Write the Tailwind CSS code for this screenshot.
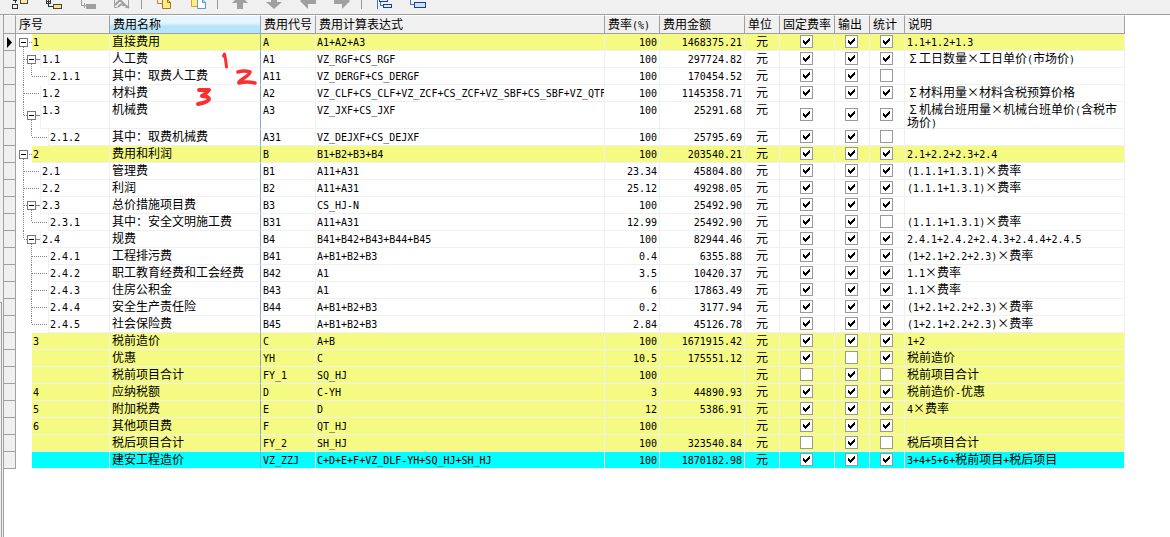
<!DOCTYPE html>
<html lang="zh-CN">
<head>
<meta charset="utf-8">
<title>费用汇总</title>
<script src="https://cdn.jsdelivr.net/npm/@tailwindcss/browser@4"></script>
</head>
<body class="min-h-screen flex flex-col bg-white text-black text-[12px] leading-[12px] font-['Noto_Sans_CJK_SC',sans-serif] overflow-hidden">
<header class="h-[15px] shrink-0 flex items-start pl-3 bg-[#f0f0f0] border-b border-[#a0a0a0]">
  <div class="flex gap-4">
    <button aria-label="插入费用"><svg class="block" width="18" height="10" fill="none" shape-rendering="crispEdges"><path d="M.5 4.500h5v4h-5zM1 .5h4M3.500 0v3" stroke="#333"/><path d="M8.500 -3v6h7v-6" fill="#fde9a0" stroke="#444"/></svg></button>
    <button aria-label="插入子费用"><svg class="block" width="18" height="10" fill="none" shape-rendering="crispEdges"><path d="M.5 -.5h4v4h-4zM0 1.500h5M2.500 0v6.500H7" stroke="#333"/><path d="M7.500 4.500h8v4h-8z" fill="#fde08a" stroke="#444"/></svg></button>
    <button aria-label="删除"><svg class="block" width="18" height="10" fill="none" shape-rendering="crispEdges"><path d="M1.500 0v5.500H6M4.500 3v5" stroke="#a0a0a0"/><path d="M6 4h10v5H6z" fill="#a0a0a0"/></svg></button>
    <button aria-label="编辑"><svg class="block" width="18" height="10" fill="none"><path d="M.5 0v7.500h3M14.500 0v7.500h-3" stroke="#a0a0a0"/><path d="M1 5L6 0l5 5 4 3M4 7q4-5 6-1" stroke="#a0a0a0" stroke-width="2"/></svg></button>
  </div>
  <span class="ml-[9px] mr-[14px] w-px h-[9px] bg-[#999]"></span>
  <div class="flex gap-4">
    <button aria-label="复制"><svg class="block" width="18" height="10" fill="none"><path d="M1.500 0v3.500H6" stroke="#c08a20"/><path d="M6.500 -2v10.500h8V2.500L11.500 0" fill="#fdec8a" stroke="#a8750e"/><path d="M11.500 0v2.500h3" stroke="#a8750e"/></svg></button>
    <button aria-label="粘贴"><svg class="block" width="18" height="10" fill="none"><path d="M1.500 -1v7.500h6V-1" fill="#fdf07c" stroke="#c8a63a"/><path d="M7.500 -2v10.500h8V2.500L12.500 0" fill="#fff" stroke="#5b9bd5"/><path d="M12.500 0v2.500h3" stroke="#5b9bd5"/></svg></button>
  </div>
  <span class="ml-[9px] mr-[14px] w-px h-[9px] bg-[#999]"></span>
  <div class="flex gap-4">
    <button aria-label="上移"><svg class="block" width="18" height="10" fill="#a0a0a0"><path d="M0 3L3 0h10l3 3h-5v6H5V3z"/></svg></button>
    <button aria-label="下移"><svg class="block" width="18" height="10" fill="#a0a0a0"><path d="M5 0h6v2h5L8 9 0 2h5z"/></svg></button>
    <button aria-label="左移"><svg class="block" width="18" height="10" fill="#a0a0a0"><path d="M0 1l1-1h15v4H8v5z"/></svg></button>
    <button aria-label="右移"><svg class="block" width="18" height="10" fill="#a0a0a0"><path d="M16 1l-1-1H0v4h8v5z"/></svg></button>
  </div>
  <span class="ml-[9px] mr-[14px] w-px h-[9px] bg-[#999]"></span>
  <div class="flex gap-4">
    <button aria-label="展开"><svg class="block" width="18" height="10" fill="none" shape-rendering="crispEdges"><path d="M1.500 0v9M4.500 0v5.500H8" stroke="#3a78c0"/><path d="M3.500 -2.500h8v4h-8zM7.500 4.500h8v3h-8z" fill="#dfe9fa" stroke="#1c3f94"/></svg></button>
    <button aria-label="折叠"><svg class="block" width="18" height="10" fill="none" shape-rendering="crispEdges"><path d="M.5 0v4.500H4" stroke="#3a78c0"/><path d="M4.500 2.500h11v5h-11z" fill="#cfdff8" stroke="#1c3f94"/></svg></button>
  </div>
</header>
<main class="relative flex-1 flex">
  <div class="w-1 shrink-0 flex flex-col bg-[#f0f0f0] border-r border-[#a0a0a0]">
    <div class="h-[287px]"></div>
    <div class="flex-1 w-[2px] border-t border-r border-[#a0a0a0]"></div>
  </div>
  <div class="flex-1 mr-[45px]">
    <table class="w-full table-fixed border-separate border-spacing-0">
      <colgroup>
        <col class="w-[12px]"><col class="w-[94px]"><col class="w-[151px]"><col class="w-[55px]"><col class="w-[289px]"><col class="w-[55px]"><col class="w-[85px]"><col class="w-[35px]"><col class="w-[55px]"><col class="w-[35px]"><col class="w-[35px]"><col>
      </colgroup>
      <thead><tr id="head"></tr></thead>
      <tbody id="rows"></tbody>
    </table>
  </div>
  <svg class="absolute left-[190px] top-[30px] pointer-events-none" width="72" height="65" fill="none" stroke="#fb2f2f" stroke-width="4" stroke-linecap="round" stroke-linejoin="round" aria-hidden="true">
    <path stroke-width="3" d="M33.500 11L34.500 9l1 5 1 8"/><path stroke-width="3.500" d="M48 27q6-2 12 0-1 3-6 6-6 4-5 5 8-2 16 0"/><path d="M9 45h10q-2 3-7 6 6 0 7 3 0 3-11 5"/>
  </svg>
</main>
<script>
const heads = ['', '序号', '费用名称', '费用代号', '费用计算表达式', '费率(%)', '费用金额', '单位', '固定费率', '输出', '统计', '说明'];
// level, number, name, code, expression, rate, amount, checks, note, tree flags (c: has children, l: last sibling, p: parent line continues), colour, height
const data = [
 [0,'1','直接费用','A','A1+A2+A3','100','1468375.21','111','1.1+1.2+1.3','c','y'],
 [1,'1.1','人工费','A1','VZ_RGF+CS_RGF','100','297724.82','111','Σ工日数量×工日单价(市场价)','c',''],
 [2,'2.1.1','其中：取费人工费','A11','VZ_DERGF+CS_DERGF','100','170454.52','110','','lp',''],
 [1,'1.2','材料费','A2','VZ_CLF+CS_CLF+VZ_ZCF+CS_ZCF+VZ_SBF+CS_SBF+VZ_QTF','100','1145358.71','111','Σ材料用量×材料含税预算价格','',''],
 [1,'1.3','机械费','A3','VZ_JXF+CS_JXF','100','25291.68','111','Σ机械台班用量×机械台班单价(含税市场价)','cl','',27],
 [2,'2.1.2','其中：取费机械费','A31','VZ_DEJXF+CS_DEJXF','100','25795.69','110','','l',''],
 [0,'2','费用和利润','B','B1+B2+B3+B4','100','203540.21','111','2.1+2.2+2.3+2.4','c','y'],
 [1,'2.1','管理费','B1','A11+A31','23.34','45804.80','111','(1.1.1+1.3.1)×费率','',''],
 [1,'2.2','利润','B2','A11+A31','25.12','49298.05','111','(1.1.1+1.3.1)×费率','',''],
 [1,'2.3','总价措施项目费','B3','CS_HJ-N','100','25492.90','111','','c',''],
 [2,'2.3.1','其中：安全文明施工费','B31','A11+A31','12.99','25492.90','110','(1.1.1+1.3.1)×费率','lp',''],
 [1,'2.4','规费','B4','B41+B42+B43+B44+B45','100','82944.46','111','2.4.1+2.4.2+2.4.3+2.4.4+2.4.5','cl',''],
 [2,'2.4.1','工程排污费','B41','A+B1+B2+B3','0.4','6355.88','111','(1+2.1+2.2+2.3)×费率','',''],
 [2,'2.4.2','职工教育经费和工会经费','B42','A1','3.5','10420.37','111','1.1×费率','',''],
 [2,'2.4.3','住房公积金','B43','A1','6','17863.49','111','1.1×费率','',''],
 [2,'2.4.4','安全生产责任险','B44','A+B1+B2+B3','0.2','3177.94','111','(1+2.1+2.2+2.3)×费率','',''],
 [2,'2.4.5','社会保险费','B45','A+B1+B2+B3','2.84','45126.78','111','(1+2.1+2.2+2.3)×费率','l',''],
 [0,'3','税前造价','C','A+B','100','1671915.42','111','1+2','','y'],
 [0,'','优惠','YH','C','10.5','175551.12','101','税前造价','','y'],
 [0,'','税前项目合计','FY_1','SQ_HJ','100','','010','税前项目合计','','y'],
 [0,'4','应纳税额','D','C-YH','3','44890.93','111','税前造价-优惠','','y'],
 [0,'5','附加税费','E','D','12','5386.91','111','4×费率','','y'],
 [0,'6','其他项目费','F','QT_HJ','100','','111','','','y'],
 [0,'','税后项目合计','FY_2','SH_HJ','100','323540.84','010','税后项目合计','','y'],
 [0,'','建安工程造价','VZ_ZZJ','C+D+E+F+VZ_DLF-YH+SQ_HJ+SH_HJ','100','1870182.98','111','3+4+5+6+税前项目+税后项目','','b'],
];
const fmt = s => s.replace(/[\x20-\x7e]+|[Σ×]/g, m => /[Σ×]/.test(m)
  ? `<span class="inline-block w-3 leading-[12px] text-center">${m}</span>`
  : `<span class="text-[10px] leading-[0] font-['DejaVu_Sans_Mono',monospace]">${m}</span>`);
const fills = { y: 'bg-[#f5fa82]', b: 'bg-[#00ffff]', '': 'bg-white' };

function tree(level, flags, h) {
  const w = 16 + level * 8, m = Math.floor(h / 2), x = level * 8 - .5;
  let d = '', box = '';
  if (level === 2 && flags.includes('p')) d += `M7.5 0V${h}`;
  if (level) d += `M${x} 0V${flags.includes('l') ? m : h}M${x} ${m + .5}H${w}`;
  if (flags.includes('c')) {
    d += `M${x + 8} ${m + 5}V${h}M${x + 13} ${m + .5}H${w}`;
    box = `<path d="M${x + 4} ${m - 3.5}h8v8h-8z" fill="#fff" stroke="#777"/><path d="M${x + 5.5} ${m + .5}h5" stroke="#000"/>`;
  }
  return `<svg class="shrink-0" width="${w}" height="${h}" fill="none" shape-rendering="crispEdges" aria-hidden="true"><path d="${d}" stroke="#808080" stroke-dasharray="1 1"/>${box}</svg>`;
}

document.getElementById('head').innerHTML = heads.map((t, i) => {
  const tone = i === 2 ? 'bg-linear-to-b from-[#e6f6fe] from-40% to-[#b8e4fb] to-60% border-r-[#8aa9c8]' : 'bg-[#f0f0f0] border-r-[#a0a0a0]';
  return `<th scope="col" aria-label="${t || '当前行'}" class="h-[19px] p-0 pl-[3px] pb-[2px] align-middle text-left font-normal whitespace-nowrap overflow-hidden border-r border-b border-t border-t-white border-b-[#a0a0a0] ${tone}">${fmt(t)}</th>`;
}).join('');

document.getElementById('rows').innerHTML = data.map((r, n) => {
  const [level, no, name, code, expr, rate, amount, checks, note, flags, color, h = 17] = r;
  const fill = fills[color];
  const edge = 'border-r border-b border-[#f0f0f0]';
  const cell = (t, extra) => `<td class="p-0 pt-px ${edge} ${extra} ${fill} align-top whitespace-nowrap overflow-hidden">${fmt(t)}</td>`;
  const check = i => `<td class="p-0 pr-px pb-px ${edge} ${fill} align-middle"><label class="grid w-[13px] mx-auto"><input type="checkbox" ${checks[i] === '1' ? 'checked' : ''} aria-label="${heads[8 + i]} ${name}" class="peer appearance-none col-start-1 row-start-1 block size-[13px] bg-white border border-[#999]"><svg class="invisible peer-checked:visible col-start-1 row-start-1 pointer-events-none" width="13" height="13" shape-rendering="crispEdges"><path d="M3 5h1v1h1v1h1v-1h1v-1h1v-1h1v-1h1v3h-1v1h-1v1h-1v1h-1v1h-1v-1h-1v-1h-1z"/></svg></label></td>`;
  return `<tr>
    <td class="p-0 bg-[#f0f0f0] border-r border-b border-[#a0a0a0]">${n ? '' : '<svg class="block ml-[3px]" width="6" height="11"><path d="M0 0l5 5.500-5 5.500z"/></svg>'}</td>
    <td class="p-0 align-top"><div class="flex">${tree(level, flags, h)}<div class="flex-1 pt-px ${level ? 'pl-px border-l' : 'pl-px'} ${edge} ${fill}">${fmt(no)}</div></div></td>
    ${cell(name, 'pl-[2px] border-r-[#8aa9c8]')}${cell(code, 'pl-[2px]')}${cell(expr, 'pl-px')}${cell(rate, 'pr-[2px] text-right')}${cell(amount, 'pr-[2px] text-right')}${cell('元', 'text-center')}
    ${check(0)}${check(1)}${check(2)}
    <td class="p-0 pl-[2px] ${edge} ${fill} align-top ${h === 27 ? 'whitespace-normal leading-[13px]' : 'pt-px whitespace-nowrap'}">${fmt(note)}</td>
  </tr>`;
}).join('');
</script>
</body>
</html>
